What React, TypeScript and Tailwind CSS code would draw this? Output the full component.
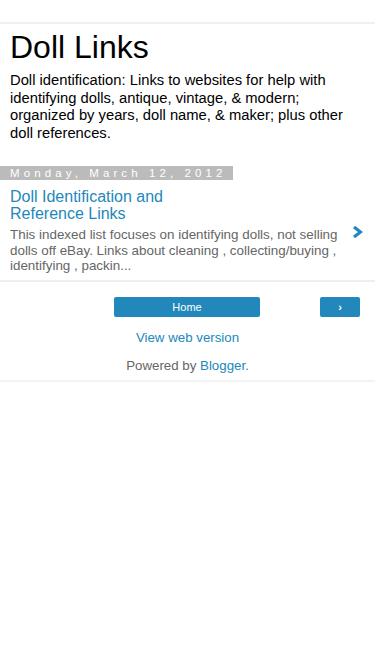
export default function App() {
  return (
    <div className="min-h-[667px] bg-white font-['Liberation_Sans',Arial,sans-serif]">
      <div className="h-[22px]" />
      <div className="border-t-2 border-[#f0f0f0]">
        <header className="px-[10px] pt-[5px]">
          <h1 className="text-[32px] leading-[36px] text-black">Doll Links</h1>
          <p className="mt-[7px] text-[14.75px] leading-[17.6px] text-black">
            Doll identification: Links to websites for help with identifying dolls, antique, vintage, &amp; modern;
            organized by years, doll name, &amp; maker; plus other doll references.
          </p>
        </header>

        <main className="mt-[18px]">
          <h2 className="inline-block bg-[#bbbbbb] pl-[10px] pr-[6px] text-[11.5px] leading-[14px] tracking-[4.1px] text-white">
            Monday, March 12, 2012
          </h2>
          <div className="flex items-start pb-[6px] pl-[10px] pr-[12px]">
            <div className="min-w-0 flex-1">
              <a className="mt-[4px] block w-[180px] text-[16px] leading-[17px] text-[#2288bb]">
                Doll Identification and Reference Links
              </a>
              <p className="mt-[5px] text-[13.4px] leading-[15.5px] text-[#666666]">
                This indexed list focuses on identifying dolls, not selling dolls off eBay. Links about cleaning ,
                collecting/buying , identifying , packin...
              </p>
            </div>
            <svg className="ml-[2px] mt-[42px] shrink-0" width="11" height="12" viewBox="0 0 11 12">
              <path d="M2 1 L8.5 6 L2 11" fill="none" stroke="#2288bb" strokeWidth="3.2" />
            </svg>
          </div>
        </main>

        <div className="border-t-2 border-[#eeeeee]">
          <div className="flex pt-[15px]">
            <div className="w-[114px]" />
            <a className="flex h-[20px] w-[146px] items-center justify-center rounded-[2px] bg-[#2288bb] text-[11px] text-white">
              Home
            </a>
            <div className="w-[60px]" />
            <a className="flex h-[20px] w-[40px] items-center justify-center rounded-[2px] bg-[#2288bb] text-[11px] font-bold text-white">
              ›
            </a>
          </div>
          <div className="mt-[13px] text-center text-[13.3px] leading-[16px] text-[#2288bb]">View web version</div>
          <div className="mt-[12px] pb-[6px] text-center text-[13.3px] leading-[16px] text-[#666666]">
            Powered by <span className="text-[#2288bb]">Blogger</span>.
          </div>
        </div>
        <div className="border-t-2 border-[#f3f3f3]" />
      </div>
    </div>
  );
}
